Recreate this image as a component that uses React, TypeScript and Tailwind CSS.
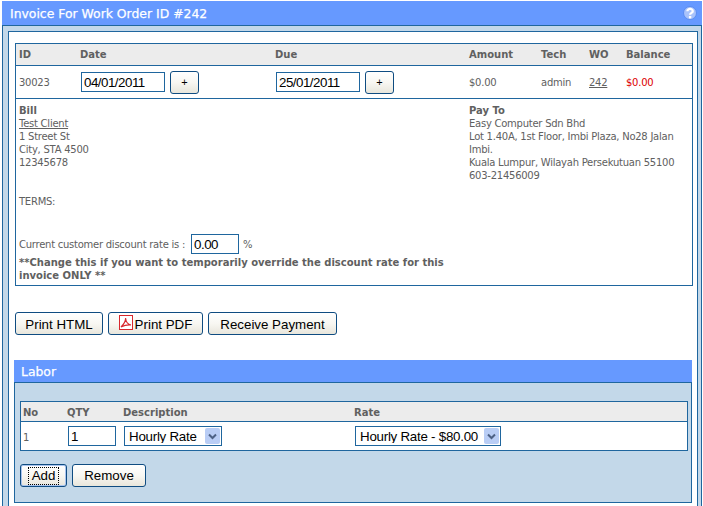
import type { ReactNode } from "react";

function Btn({ children, className = "" }: { children: ReactNode; className?: string }) {
  return (
    <button
      type="button"
      className={`h-[23px] rounded-[3px] border border-[#0f4c81] bg-gradient-to-b from-white via-[#f8f7f2] to-[#e8e6dc] pt-px font-['Liberation_Sans',sans-serif] text-[13.33px] tracking-normal text-black ${className}`}
    >
      {children}
    </button>
  );
}

function Field({ value, className = "" }: { value: string; className?: string }) {
  return (
    <input
      readOnly
      value={value}
      className={`h-[20px] border border-[#1f669e] bg-white px-[2px] font-['Liberation_Sans',sans-serif] text-[13.33px] tracking-[-0.5px] text-black outline-none ${className}`}
    />
  );
}

function Dropdown({ label, className = "" }: { label: string; className?: string }) {
  return (
    <div className={`relative h-[20px] ${className}`}>
      <select className="h-full w-full appearance-none border border-[#1f669e] bg-white pl-[4px] font-['Liberation_Sans',sans-serif] text-[13.33px] tracking-[-0.25px] text-black outline-none">
        <option>{label}</option>
      </select>
      <div className="absolute right-[2px] top-[2px] flex h-[16px] w-[15px] items-center justify-center rounded-[2px] bg-[#b9cdf5]">
        <svg width="9" height="7" viewBox="0 0 9 7">
          <path d="M1 1.5 L4.5 5 L8 1.5" fill="none" stroke="#4d6185" strokeWidth="2" />
        </svg>
      </div>
    </div>
  );
}

export default function App() {
  return (
    <div className="h-[506px] overflow-hidden bg-white pt-px font-['DejaVu_Sans',sans-serif] text-[10px] leading-[13px] tracking-[-0.25px] text-[#606060]">
      <div className="ml-[2px] w-[700px]">
        <div className="flex h-[24px] items-center justify-between bg-[#6699ff] pl-[8px] pr-[4px] text-[12.4px] tracking-normal text-white [-webkit-text-stroke:0.25px_white]">
          <span>Invoice For Work Order ID #242</span>
          <svg width="14" height="14" viewBox="0 0 14 14" className="mr-px">
            <circle cx="7" cy="7" r="6.5" fill="#a9c3fb" stroke="#5b8cf0" />
            <path d="M4.4 5.2 C4.4 2.2 9.8 2.2 9.8 5.2 C9.8 7 7.1 6.8 7.1 8.8" fill="none" stroke="#fff" strokeWidth="2.2" />
            <rect x="5.9" y="10" width="2.4" height="2.4" fill="#fff" />
          </svg>
        </div>

        <div className="border-x border-t border-[#1f669e] bg-[#c3d8e9] pl-[5px] pr-[3px] pt-[5px]">
          <div className="h-[480px] border border-[#1f669e] bg-white pl-[6px] pr-[4px] pt-[11px]">
            <div className="w-[678px] border border-[#1f669e]">
              <div className="grid h-[22px] grid-cols-[61px_195px_194px_72px_48px_37px_1fr] items-center border-b border-[#1f669e] bg-[#ececec] pl-[3px] font-bold tracking-normal">
                <span>ID</span>
                <span>Date</span>
                <span>Due</span>
                <span>Amount</span>
                <span>Tech</span>
                <span>WO</span>
                <span>Balance</span>
              </div>
              <div className="grid h-[33px] grid-cols-[61px_195px_194px_72px_48px_37px_1fr] items-center border-b border-[#1f669e] pl-[3px]">
                <span className="pt-px">30023</span>
                <div className="ml-px flex items-center gap-[5px]">
                  <Field value="04/01/2011" className="w-[84px]" />
                  <Btn className="w-[29px]"><span className="-mt-px block text-[11px]">+</span></Btn>
                </div>
                <div className="ml-px flex items-center gap-[5px]">
                  <Field value="25/01/2011" className="w-[84px]" />
                  <Btn className="w-[29px]"><span className="-mt-px block text-[11px]">+</span></Btn>
                </div>
                <span className="pt-px">$0.00</span>
                <span className="pt-px">admin</span>
                <span className="pt-px underline">242</span>
                <span className="pt-px text-[#dd0000]">$0.00</span>
              </div>
              <div className="flex h-[186px] pl-[3px] pt-[5px]">
                <div className="w-[450px]">
                  <div className="font-bold tracking-normal">Bill</div>
                  <div className="underline">Test Client</div>
                  <div>1 Street St</div>
                  <div>City, STA 4500</div>
                  <div>12345678</div>
                  <div className="mt-[26px]">TERMS:</div>
                  <div className="mt-[26px] flex h-[20px] items-center">
                    <span className="pt-px">Current customer discount rate is :</span>
                    <Field value="0.00" className="ml-[6px] w-[48px]" />
                    <span className="ml-[4px] pt-px">%</span>
                  </div>
                  <div className="mt-[2px] w-[440px] font-bold tracking-normal">
                    **Change this if you want to temporarily override the discount rate for this invoice ONLY **
                  </div>
                </div>
                <div className="w-[222px]">
                  <div className="font-bold tracking-normal">Pay To</div>
                  <div>Easy Computer Sdn Bhd</div>
                  <div>Lot 1.40A, 1st Floor, Imbi Plaza, No28 Jalan Imbi.</div>
                  <div>Kuala Lumpur, Wilayah Persekutuan 55100</div>
                  <div>603-21456009</div>
                </div>
              </div>
            </div>

            <div className="mt-[26px] flex items-end gap-[5px]">
              <Btn className="h-[22px] w-[88px]">Print HTML</Btn>
              <Btn className="flex w-[95px] items-center justify-center gap-[2px]">
                <svg width="14" height="15" viewBox="0 0 14 15" className="-mt-[3px]">
                  <rect x="0.5" y="0.5" width="13" height="14" fill="#fff" stroke="#d8272d" />
                  <path d="M2 12 C5 9 7 6 6.5 3 C7 7 9 9.5 12 10 C8 9.5 5 10.5 2 12 Z" fill="none" stroke="#d8272d" strokeWidth="1.2" />
                </svg>
                Print PDF
              </Btn>
              <Btn className="h-[22px] w-[129px]">Receive Payment</Btn>
            </div>

            <div className="-ml-px mt-[25px] w-[678px]">
              <div className="flex h-[22px] items-center bg-[#6699ff] pl-[7px] pt-px text-[12.4px] tracking-normal text-white [-webkit-text-stroke:0.25px_white]">Labor</div>
              <div className="border border-[#1f669e] bg-[#c3d8e9] pb-[15px] pl-[5px] pr-[3px] pt-[18px]">
                <div className="w-[668px] border border-[#1f669e] bg-white">
                  <div className="grid h-[20px] grid-cols-[44px_56px_231px_1fr] items-center border-b border-[#1f669e] bg-[#ececec] pl-[2px] pt-px font-bold tracking-normal">
                    <span>No</span>
                    <span>QTY</span>
                    <span>Description</span>
                    <span>Rate</span>
                  </div>
                  <div className="grid h-[28px] grid-cols-[44px_56px_231px_1fr] items-center pl-[2px]">
                    <span className="pt-[2px]">1</span>
                    <Field value="1" className="ml-px w-[48px]" />
                    <Dropdown label="Hourly Rate" className="ml-px w-[98px]" />
                    <Dropdown label="Hourly Rate - $80.00" className="ml-px w-[146px]" />
                  </div>
                </div>
                <div className="mt-[13px] flex gap-[5px]">
                  <Btn className="flex w-[47px] items-center justify-center border-[#0b4fa0] shadow-[inset_0_0_0_1px_#a9c4f0]">
                    <span className="-mt-px flex h-[18px] w-[31px] items-center justify-center border border-dotted border-black">Add</span>
                  </Btn>
                  <Btn className="w-[74px]"><span className="-mt-px block">Remove</span></Btn>
                </div>
              </div>
            </div>
          </div>
        </div>
      </div>
    </div>
  );
}
